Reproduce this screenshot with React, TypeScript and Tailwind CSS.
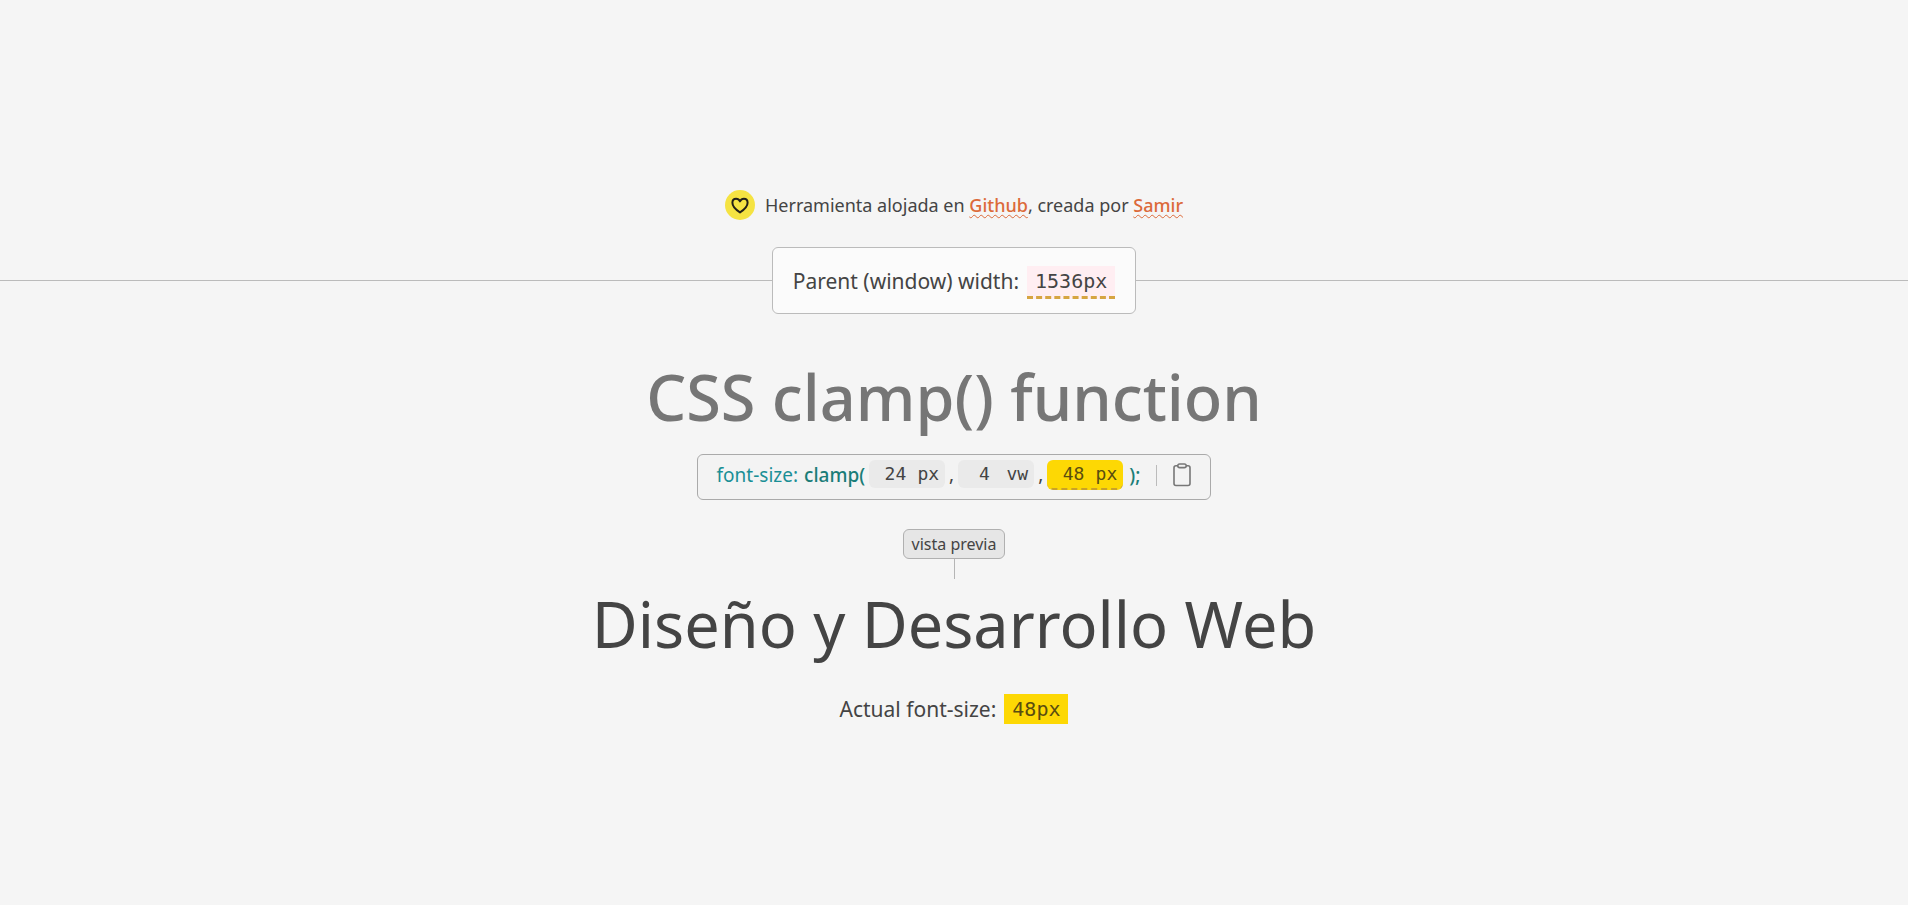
import React, { useState } from 'react';

const mono = "font-['DejaVu_Sans_Mono',monospace]";

const HeartIcon = () => (
  <svg viewBox="0 0 30 30" className="size-[30px]" aria-hidden="true">
    <circle cx="15" cy="15" r="15" fill="#f5e342" />
    <path
      d="M15 22.4C11.2 20 7.4 16.6 7.4 12.8C7.4 10.3 9 8.7 11.1 8.7C12.8 8.7 14.2 9.6 15 11.4C15.8 9.6 17.2 8.7 18.9 8.7C21 8.7 22.6 10.3 22.6 12.8C22.6 16.6 18.8 20 15 22.4Z"
      fill="none"
      stroke="#222018"
      strokeWidth="2"
      strokeLinejoin="round"
    />
  </svg>
);

const ClipboardIcon = () => (
  <svg viewBox="0 0 18 24" className="h-6 w-[18px]" fill="none" stroke="#777" strokeWidth="1.6" aria-hidden="true">
    <path d="M5 2.7H3C1.8 2.7 1 3.5 1 4.7V20.5C1 21.7 1.8 22.5 3 22.5H15C16.2 22.5 17 21.7 17 20.5V4.7C17 3.5 16.2 2.7 15 2.7H13" />
    <path d="M6.6 1H11.4C12.5 1 13.2 1.8 13.2 2.7C13.2 3.8 12.5 4.6 11.4 4.6H6.6C5.5 4.6 4.8 3.8 4.8 2.7C4.8 1.8 5.5 1 6.6 1Z" />
  </svg>
);

interface FieldProps {
  label: string;
  unit: string;
  value: string;
  onChange: (value: string) => void;
  active?: boolean;
}

const Field = ({ label, unit, value, onChange, active }: FieldProps) => (
  <label
    className={`flex w-[76px] items-center justify-end rounded-md pr-1.5 text-lg leading-7 ${mono} ${
      active ? 'border-b-2 border-dashed border-[#c9a227] bg-[#fdd804] text-[#5a4d10]' : 'bg-[#eaeaea]'
    }`}
  >
    <input
      type="text"
      aria-label={label}
      value={value}
      onChange={(e) => onChange(e.target.value)}
      className="mr-1.5 w-8 bg-transparent text-center outline-none"
    />
    <span>{unit}</span>
  </label>
);

const App = () => {
  const [min, setMin] = useState('24');
  const [val, setVal] = useState('4');
  const [max, setMax] = useState('48');

  const copy = () => {
    navigator.clipboard.writeText(`font-size: clamp(${min}px, ${val}vw, ${max}px);`);
  };

  return (
    <div className="flex min-h-screen flex-col items-center bg-[#f5f5f5] pt-[190px] font-['Noto_Sans',sans-serif] text-[#444]">
      <div className="flex items-center gap-2.5">
        <HeartIcon />
        <p className="text-lg leading-[30px]">
          Herramienta alojada en{' '}
          <a href="#github" className="font-medium text-[#dc6a3a] underline decoration-wavy decoration-1 underline-offset-2">Github</a>
          , creada por{' '}
          <a href="#samir" className="font-medium text-[#dc6a3a] underline decoration-wavy decoration-1 underline-offset-2">Samir</a>
        </p>
      </div>

      <div className="mt-[27px] flex w-full items-center">
        <div className="h-px flex-1 bg-[#bbb]" />
        <div className="flex h-[67px] items-center rounded-md border border-[#bbb] bg-[#fbfbfb] px-5">
          <p className="flex items-start gap-2 pt-1 text-[21px] leading-[30px]">
            Parent (window) width:
            <span className={`border-b-3 border-dashed border-[#d6a541] bg-[#ffeef2] px-2 text-xl leading-[30px] ${mono}`}>1536px</span>
          </p>
        </div>
        <div className="h-px flex-1 bg-[#bbb]" />
      </div>

      <h1 className="mt-12 text-[63px] leading-[70px] font-medium text-[#767676]">CSS clamp() function</h1>

      <div className="mt-[22px] flex h-[46px] items-center rounded-md border border-[#aaa] bg-[#f3f3f3] px-[19px] pb-1 text-[19px]">
        <span className="text-[#1a8f96]">font-size:</span>
        <span className="ml-1.5 font-medium text-[#1a7d78]">clamp(</span>
        <div className="ml-1 flex items-start gap-1 leading-7">
          <Field label="Min" unit="px" value={min} onChange={setMin} />
          <span>,</span>
          <Field label="Preferred" unit="vw" value={val} onChange={setVal} />
          <span>,</span>
          <Field label="Max" unit="px" value={max} onChange={setMax} active />
        </div>
        <span className="ml-1.5 font-medium text-[#1a7d78]">);</span>
        <div className="mx-4 h-[21px] w-px bg-[#bbb]" />
        <button type="button" aria-label="Copy" onClick={copy}>
          <ClipboardIcon />
        </button>
      </div>

      <div className="mt-[29px] rounded-md border border-[#b0b0b0] bg-[#e6e6e6] px-2 text-base leading-7">vista previa</div>
      <div className="h-5 w-px bg-[#b5b5b5]" />

      <h2 className="mt-2.5 text-[63px] leading-[70px]">Diseño y Desarrollo Web</h2>

      <p className="mt-[35px] flex items-start gap-2 text-[21px] leading-[30px]">
        Actual font-size:
        <span className={`bg-[#fdd804] px-2 text-xl leading-[30px] text-[#5a4d10] ${mono}`}>48px</span>
      </p>
    </div>
  );
};

export default App;
